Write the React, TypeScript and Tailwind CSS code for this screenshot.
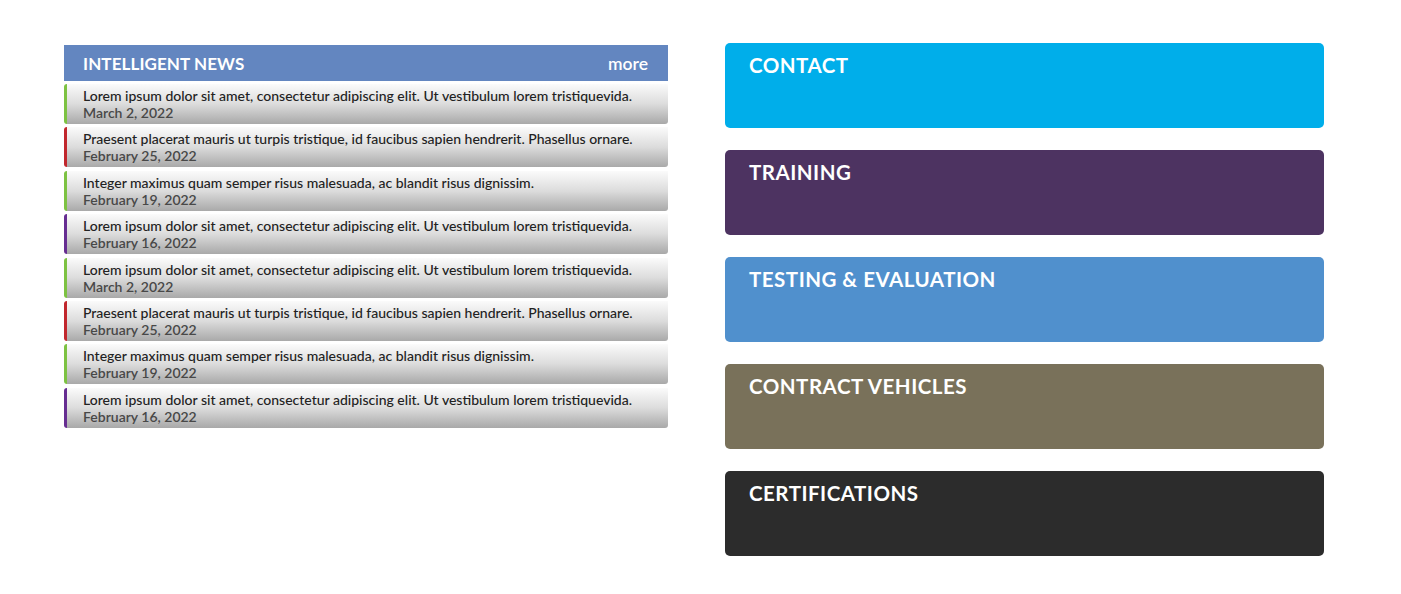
import React from "react";

const items = [
  { t: "Lorem ipsum dolor sit amet, consectetur adipiscing elit. Ut vestibulum lorem tristiquevida.", d: "March 2, 2022", c: "border-l-[#7dc242]" },
  { t: "Praesent placerat mauris ut turpis tristique, id faucibus sapien hendrerit. Phasellus ornare.", d: "February 25, 2022", c: "border-l-[#c1272d]" },
  { t: "Integer maximus quam semper risus malesuada, ac blandit risus dignissim.", d: "February 19, 2022", c: "border-l-[#7dc242]" },
  { t: "Lorem ipsum dolor sit amet, consectetur adipiscing elit. Ut vestibulum lorem tristiquevida.", d: "February 16, 2022", c: "border-l-[#662d91]" },
  { t: "Lorem ipsum dolor sit amet, consectetur adipiscing elit. Ut vestibulum lorem tristiquevida.", d: "March 2, 2022", c: "border-l-[#7dc242]" },
  { t: "Praesent placerat mauris ut turpis tristique, id faucibus sapien hendrerit. Phasellus ornare.", d: "February 25, 2022", c: "border-l-[#c1272d]" },
  { t: "Integer maximus quam semper risus malesuada, ac blandit risus dignissim.", d: "February 19, 2022", c: "border-l-[#7dc242]" },
  { t: "Lorem ipsum dolor sit amet, consectetur adipiscing elit. Ut vestibulum lorem tristiquevida.", d: "February 16, 2022", c: "border-l-[#662d91]" },
];

const cards = [
  { t: "CONTACT", c: "bg-[#00aeea]" },
  { t: "TRAINING", c: "bg-[#4d3361]" },
  { t: "TESTING & EVALUATION", c: "bg-[#5090cd]" },
  { t: "CONTRACT VEHICLES", c: "bg-[#79715a]" },
  { t: "CERTIFICATIONS", c: "bg-[#2c2c2c]" },
];

export default function App() {
  return (
    <div className="w-[1401px] h-[594px] bg-white flex pl-[64px] pt-[43px] gap-[57px]" style={{ fontFamily: "Lato, 'Open Sans', sans-serif" }}>
      <div className="w-[604px] pt-[2px] flex flex-col">
        <div className="h-[36px] bg-[#6386c0] flex items-center justify-between pl-[19px] pr-[20px] pt-[2px] text-white">
          <span className="text-[17px] font-bold tracking-[0.1px]">INTELLIGENT NEWS</span>
          <span className="text-[17.5px] font-semibold">more</span>
        </div>
        <div className="flex flex-col gap-[3.4px] mt-[3px]">
          {items.map((it, i) => (
            <div
              key={i}
              className={`h-[40px] border-l-[3px] ${it.c} rounded-l-[3px] rounded-br-[3px] bg-gradient-to-b from-[#fbfbfb] via-[#dcdcdc] to-[#a9a9a9] pl-[16px] pt-[3px] leading-[17px]`}
            >
              <div className="text-[14px] text-[#222] font-medium">{it.t}</div>
              <div className="text-[14px] text-[#484848] font-semibold">{it.d}</div>
            </div>
          ))}
        </div>
      </div>
      <div className="w-[599px] flex flex-col gap-[22px]">
        {cards.map((c, i) => (
          <div key={i} className={`h-[85px] rounded-[5px] ${c.c} pl-[24px] pt-[7px]`}>
            <div className="text-white text-[20.5px] font-bold tracking-[0.5px]">{c.t}</div>
          </div>
        ))}
      </div>
    </div>
  );
}
